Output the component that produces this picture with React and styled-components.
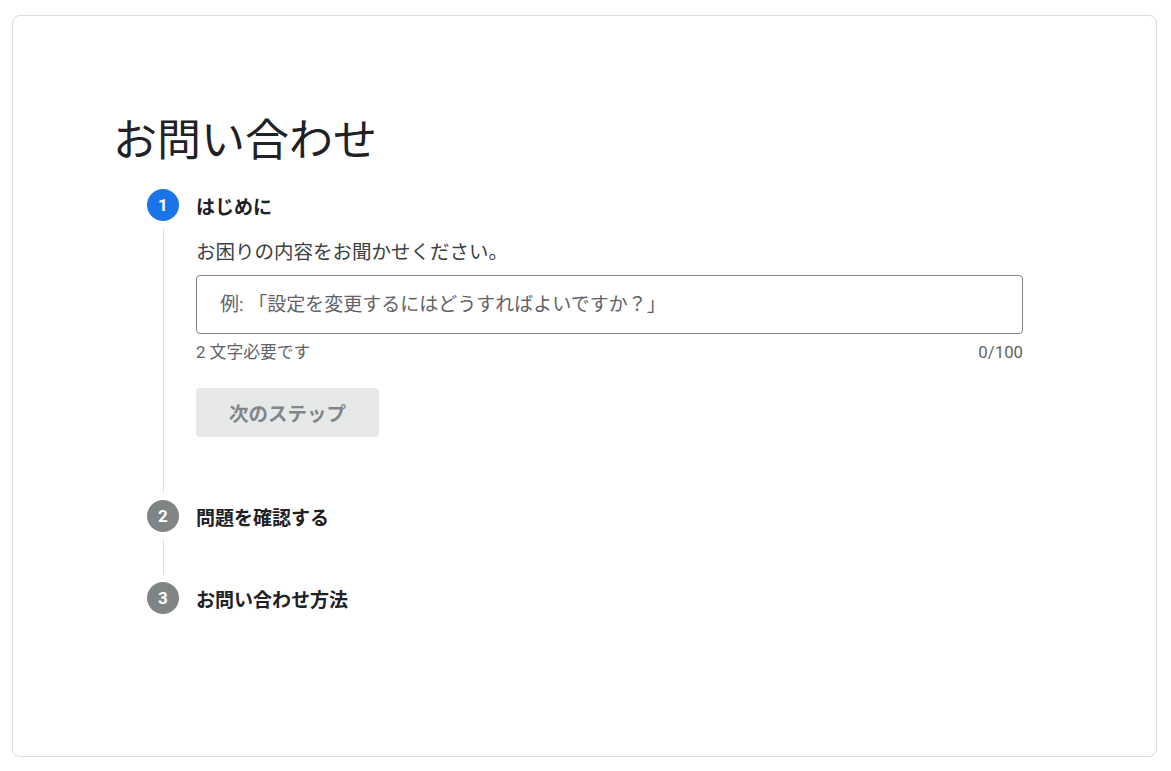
import React from "react";
import styled, { createGlobalStyle } from "styled-components";

const Global = createGlobalStyle`
  html, body { margin: 0; padding: 0; background: #ffffff; }
  body { font-family: Roboto, "Noto Sans CJK JP", "Noto Sans", sans-serif; color: #202124; }
  * { box-sizing: border-box; }
`;

const Page = styled.div`
  height: 100vh;
  padding: 15px 14px 14px 12px;
  display: flex;
`;

const Card = styled.main`
  flex: 1;
  border: 1px solid #dadce0;
  border-radius: 8px;
  padding: 97px 100px 0 100px;
  background: #fff;
`;

const Title = styled.h1`
  margin: 0;
  font-size: 44px;
  line-height: 56px;
  font-weight: 400;
  color: #202124;
`;

const Stepper = styled.ol`
  list-style: none;
  margin: 20px 0 0 34px;
  padding: 0;
`;

const StepRow = styled.li`
  display: flex;
  gap: 17px;
`;

const Rail = styled.div`
  width: 32px;
  display: flex;
  flex-direction: column;
  align-items: center;
  flex: none;
`;

const Circle = styled.div`
  width: 32px;
  height: 32px;
  border-radius: 50%;
  background: ${(p) => (p.$active ? "#1a73e8" : "#7f8584")};
  color: #fff;
  font-size: 17px;
  font-weight: 700;
  display: flex;
  align-items: center;
  justify-content: center;
  flex: none;
`;

const Connector = styled.div`
  flex: 1;
  width: 1px;
  background: #dadce0;
  margin: 8px 0 8px;
`;

const Body = styled.div`
  flex: 1;
  padding-bottom: ${(p) => p.$gap}px;
`;

const StepTitle = styled.div`
  height: 32px;
  display: flex;
  align-items: center;
  font-size: 19px;
  font-weight: 700;
  color: #202124;
`;

const Form = styled.div`
  max-width: 827px;
  padding-top: 18px;
`;

const Prompt = styled.p`
  margin: 0;
  font-size: 19.5px;
  line-height: 28px;
  color: #3c4043;
`;

const Field = styled.input`
  display: block;
  width: 100%;
  height: 59px;
  margin-top: 8px;
  padding: 0 23px;
  border: 1px solid #80868b;
  border-radius: 4px;
  font-family: inherit;
  font-size: 19px;
  color: #202124;
  outline: none;
  &::placeholder { color: #5f6368; }
`;

const HelperRow = styled.div`
  display: flex;
  justify-content: space-between;
  margin-top: 8px;
  font-size: 16.8px;
  line-height: 20px;
  color: #5f6368;
`;

const NextButton = styled.button`
  margin-top: 26px;
  height: 49px;
  padding: 0 33px;
  border: none;
  border-radius: 4px;
  background: #e6e9e8;
  color: #80868b;
  font-family: inherit;
  font-size: 19.5px;
  font-weight: 700;
  cursor: default;
`;

function Step({ num, title, active, last, gap, children }) {
  return (
    <StepRow>
      <Rail>
        <Circle $active={active}>{num}</Circle>
        {!last && <Connector />}
      </Rail>
      <Body $gap={gap}>
        <StepTitle>{title}</StepTitle>
        {children}
      </Body>
    </StepRow>
  );
}

export default function App() {
  return (
    <>
      <Global />
      <Page>
        <Card>
          <Title>お問い合わせ</Title>
          <Stepper>
            <Step num={1} title="はじめに" active gap={63}>
              <Form>
                <Prompt>お困りの内容をお聞かせください。</Prompt>
                <Field placeholder="例: 「設定を変更するにはどうすればよいですか？」" />
                <HelperRow>
                  <span>2 文字必要です</span>
                  <span>0/100</span>
                </HelperRow>
                <NextButton disabled>次のステップ</NextButton>
              </Form>
            </Step>
            <Step num={2} title="問題を確認する" gap={50} />
            <Step num={3} title="お問い合わせ方法" last gap={0} />
          </Stepper>
        </Card>
      </Page>
    </>
  );
}
